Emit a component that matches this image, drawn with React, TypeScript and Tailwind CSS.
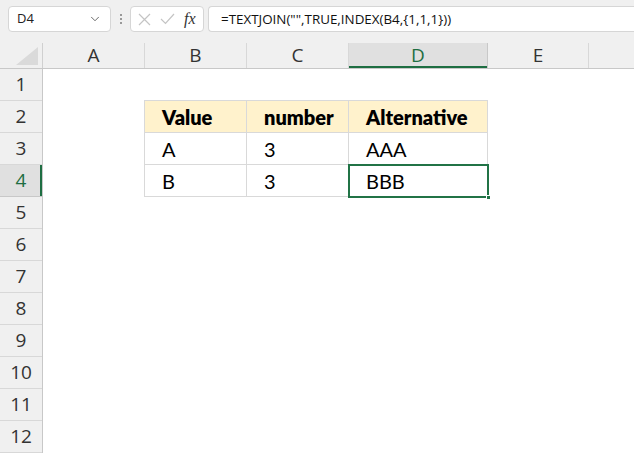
import { ChevronDown } from "lucide-react";

const cols = [
  { name: "A", w: 102 },
  { name: "B", w: 102 },
  { name: "C", w: 102 },
  { name: "D", w: 139 },
  { name: "E", w: 101 },
  { name: "", w: 102 },
];

const rows = [1, 2, 3, 4, 5, 6, 7, 8, 9, 10, 11, 12];

const table = [
  ["Value", "number", "Alternative"],
  ["A", "3", "AAA"],
  ["B", "3", "BBB"],
];

function FormulaBar() {
  return (
    <div className="flex h-[43px] items-start gap-0 bg-[#f0f0f0] pt-[6px] pl-2">
      <div className="flex h-[26px] w-[103px] items-center justify-between rounded-[4px] border border-[#d6d6d6] bg-white pl-2 pr-2 text-[13px] text-[#222]">
        <span>D4</span>
        <ChevronDown size={14} strokeWidth={1.5} className="text-[#555]" />
      </div>
      <div className="flex h-[26px] w-[19px] flex-col items-center justify-center gap-[2px]">
        <span className="h-[2px] w-[2px] bg-[#999]" />
        <span className="h-[2px] w-[2px] bg-[#999]" />
        <span className="h-[2px] w-[2px] bg-[#999]" />
      </div>
      <div className="flex h-[26px] w-[74px] items-center gap-[9px] rounded-[4px] border border-[#d6d6d6] bg-white pl-[7px]">
        <svg width="13" height="13" viewBox="0 0 13 13" fill="none" stroke="#c4c4c4" strokeWidth="1.2">
          <path d="M1 1 L12 12 M12 1 L1 12" />
        </svg>
        <svg width="15" height="12" viewBox="0 0 15 12" fill="none" stroke="#c4c4c4" strokeWidth="1.2">
          <path d="M1 6 L5.5 10.5 L14 1" />
        </svg>
        <span className="font-['Liberation_Serif',serif] text-[16px] italic text-[#333]">fx</span>
      </div>
      <div className="ml-[4px] flex h-[26px] flex-1 items-center rounded-l-[4px] border border-r-0 border-[#d6d6d6] bg-white pl-3 text-[13.4px] text-[#111]">
        =TEXTJOIN("",TRUE,INDEX(B4,{"{"}1,1,1{"}"}))
      </div>
    </div>
  );
}

export default function App() {
  return (
    <div className="h-[459px] w-[634px] overflow-hidden bg-white font-['Open_Sans',sans-serif]">
      <FormulaBar />
      <div className="flex h-[26px] border-b border-[#c8c8c8] bg-[#f0f0f0]">
        <div className="relative w-[43px] shrink-0 border-r border-[#d0d0d0]">
          <svg className="absolute right-[4px] bottom-[3px]" width="22" height="18" viewBox="0 0 22 18">
            <path d="M22 0 L22 18 L0 18 Z" fill="#dadada" />
          </svg>
        </div>
        {cols.map((c, i) => (
          <div
            key={i}
            style={{ width: c.w }}
            className={`flex shrink-0 items-center justify-center border-r text-[19px] ${
              c.name === "D"
                ? "border-[#c8c8c8] bg-[#e0e0e0] text-[#1e6e42] shadow-[inset_0_-2px_0_#1e6e42]"
                : "border-[#d8d8d8] text-[#333]"
            }`}
          >
            {c.name}
          </div>
        ))}
      </div>
      <div className="flex">
        <div className="w-[43px] shrink-0 border-r border-[#c8c8c8] bg-[#f0f0f0]">
          {rows.map((r) => (
            <div
              key={r}
              className={`flex h-[32px] items-center justify-center border-b text-[19px] ${
                r === 4
                  ? "border-[#c8c8c8] bg-[#e0e0e0] text-[#1e6e42] shadow-[inset_-2px_0_0_#1e6e42]"
                  : "border-[#d8d8d8] text-[#333]"
              }`}
            >
              {r}
            </div>
          ))}
        </div>
        <div className="flex-1 pt-[31px] pl-[101px] font-['Lato',sans-serif] text-[20px] text-black">
          <div className="relative w-fit">
            {table.map((row, i) => (
              <div key={i} className="flex">
                {row.map((cell, j) => (
                  <div
                    key={j}
                    style={{ width: cols[j + 1].w + 1 }}
                    className={`flex h-[33px] items-center border border-[#d9d9d9] pl-[17px] ${
                      j > 0 ? "-ml-px" : ""
                    } ${i > 0 ? "-mt-px" : ""} ${
                      i === 0 ? "bg-[#fff2cc] font-extrabold" : "bg-white"
                    }`}
                  >
                    {cell}
                  </div>
                ))}
              </div>
            ))}
            <div className="absolute right-[-1px] bottom-[-1px] h-[34px] w-[141px] border-2 border-[#217346]" />
            <div className="absolute right-[-3px] bottom-[-3px] h-[5px] w-[5px] border border-white bg-[#217346]" />
          </div>
        </div>
      </div>
    </div>
  );
}
